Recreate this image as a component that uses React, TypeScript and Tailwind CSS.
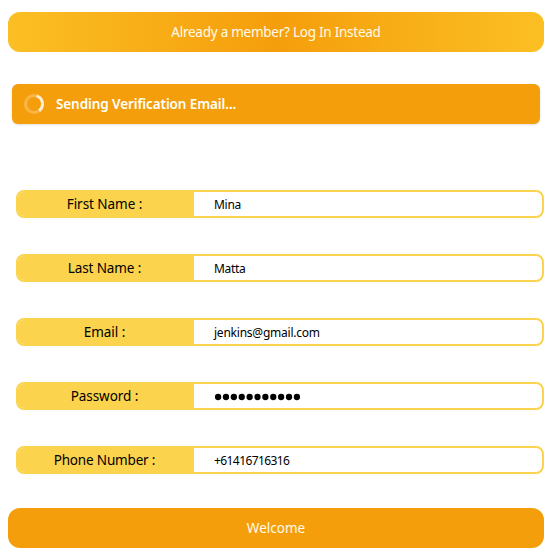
const fields = [
  { label: 'First Name :', value: 'Mina', type: 'text', tracking: 'tracking-[-0.05px]', valueTracking: 'tracking-[-0.3px]' },
  { label: 'Last Name :', value: 'Matta', type: 'text', tracking: 'tracking-[-0.1px]', valueTracking: 'tracking-[-0.3px]' },
  { label: 'Email :', value: 'jenkins@gmail.com', type: 'text', tracking: 'tracking-[-0.05px]', valueTracking: 'tracking-[-0.23px]' },
  { label: 'Password :', value: '', type: 'password', tracking: 'tracking-[-0.05px]', valueTracking: '' },
  { label: 'Phone Number :', value: '+61416716316', type: 'text', tracking: 'tracking-[-0.17px]', valueTracking: 'tracking-[-0.58px]' },
];

function Spinner() {
  return (
    <svg className="h-5 w-5 shrink-0" viewBox="0 0 20 20" fill="none" stroke="#fff">
      <circle cx="10" cy="10" r="8.5" strokeWidth="3" opacity=".25" />
      <path d="M12.6 1.9A8.5 8.5 0 0 1 15.2 16.75" strokeWidth="3" opacity=".75" />
    </svg>
  );
}

function Dots() {
  return (
    <svg className="h-[8px] w-[88px]" viewBox="0 0 88 8" role="img" aria-label="Password hidden">
      {Array.from({ length: 11 }, (_, i) => (
        <circle key={i} cx={4.1 + i * 7.88} cy="4" r="3.15" />
      ))}
    </svg>
  );
}

export default function App() {
  return (
    <main className="h-[558px] w-[555px] bg-white pt-3 pr-[11px] pl-2 font-['Noto_Sans','Open_Sans',sans-serif] text-[13.5px]">
      <button className="flex h-10 w-full items-center justify-center rounded-xl bg-[linear-gradient(to_right,#fbbf24,#f59e0b,#fbbf24)] text-amber-50">
        <span className="pt-px tracking-[-0.25px]">Already a member? Log In Instead</span>
      </button>

      <div className="mx-1 mt-8 flex h-10 items-center rounded-md bg-[#f59e0b] pl-3 font-semibold text-white shadow">
        <Spinner />
        <span className="ml-3 tracking-[-0.1px]">Sending Verification Email...</span>
      </div>

      <form className="mt-[66px] ml-2 flex flex-col gap-9">
        {fields.map((f) => (
          <div key={f.label} className="flex h-7 overflow-hidden rounded-lg border-2 border-[#fcd34d]">
            <label className="flex w-44 items-center justify-center bg-[#fcd34d] pr-[3px] text-black">
              <span className={f.tracking}>{f.label}</span>
            </label>
            <div className="flex flex-1 items-center pt-px pl-5 text-xs text-black">
              {f.type === 'password' ? <Dots /> : <span className={f.valueTracking}>{f.value}</span>}
            </div>
          </div>
        ))}
      </form>

      <button className="mt-[34px] flex h-10 w-full items-center justify-center rounded-xl bg-[#f59e0b] text-amber-50">
        <span className="pt-px">Welcome</span>
      </button>
    </main>
  );
}
